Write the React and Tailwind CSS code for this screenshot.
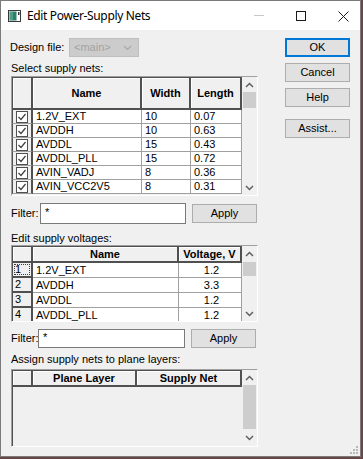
import React from "react";

const Chevron = ({ up }) => (
  <svg width="9" height="6" viewBox="0 0 9 6">
    <polyline
      points={up ? "1,5 4.5,1.5 8,5" : "1,1 4.5,4.5 8,1"}
      fill="none"
      stroke="#606060"
      strokeWidth="1.5"
    />
  </svg>
);

const Scrollbar = ({ upH, thumbH, trackH, downH }) => (
  <div className="w-[15px] flex flex-col bg-[#f0f0f0] shrink-0">
    <div className="flex items-center justify-center" style={{ height: upH }}>
      <Chevron up />
    </div>
    <div className="bg-[#cdcdcd] mx-[1px]" style={{ height: thumbH }} />
    <div style={{ height: trackH }} />
    <div className="flex items-center justify-center" style={{ height: downH }}>
      <Chevron />
    </div>
  </div>
);

const Check = () => (
  <div className="w-[12px] h-[12px] border border-[#505050] bg-white flex items-center justify-center">
    <svg width="10" height="10" viewBox="0 0 10 10">
      <polyline points="1.5,5 4,7.5 8.5,2" fill="none" stroke="#404040" strokeWidth="1.2" />
    </svg>
  </div>
);

const HeadCell = ({ w, children, first }) => (
  <div
    className={
      "h-full flex items-center justify-center font-bold bg-[#f0f0f0] border-r-2 border-b-2 border-[#505050] shadow-[inset_1px_1px_0_#ffffff] shrink-0 " +
      (first ? "border-l border-l-[#505050]" : "")
    }
    style={{ width: w }}
  >
    {children}
  </div>
);

const DataCell = ({ w, children, center }) => (
  <div
    className={
      "h-full flex items-center bg-white border-r border-b border-[#a0a0a0] shrink-0 pl-[3px] " +
      (center ? "justify-center pl-0" : "")
    }
    style={{ width: w }}
  >
    {children}
  </div>
);

const nets = [
  ["1.2V_EXT", "10", "0.07"],
  ["AVDDH", "10", "0.63"],
  ["AVDDL", "15", "0.43"],
  ["AVDDL_PLL", "15", "0.72"],
  ["AVIN_VADJ", "8", "0.36"],
  ["AVIN_VCC2V5", "8", "0.31"],
];

const volts = [
  ["1.2V_EXT", "1.2"],
  ["AVDDH", "3.3"],
  ["AVDDL", "1.2"],
  ["AVDDL_PLL", "1.2"],
];

const Btn = ({ children, def, className = "" }) => (
  <div
    className={
      "w-[65px] h-[19px] flex items-center justify-center bg-[#e1e1e1] " +
      (def ? "border-2 border-[#0078d7]" : "border border-[#adadad]") +
      " " +
      className
    }
  >
    {children}
  </div>
);

export default function App() {
  return (
    <div className="w-[363px] h-[459px] bg-[#6a4747] font-['Liberation_Sans',Arial,sans-serif] text-[11px] text-black">
      <div className="w-[361px] h-[457px] border border-[#7b7b7b] bg-[#f0f0f0] flex flex-col overflow-hidden">
        {/* Title bar */}
        <div className="h-[29px] bg-white flex items-center shrink-0 relative">
          <svg className="ml-[7px]" width="13" height="12" viewBox="0 0 13 12">
            <rect x="0.5" y="0.5" width="12" height="11" fill="#ffffff" stroke="#3a3a3a" />
            <rect x="1.5" y="1.5" width="7" height="9" fill="#2f7d6a" />
            <rect x="2" y="2" width="3" height="8" fill="#4e9e86" />
            <rect x="10" y="2" width="1.5" height="3" fill="#3a3a3a" />
          </svg>
          <span className="ml-[6px] font-['Noto_Sans',sans-serif] text-[12px] tracking-[-0.35px] text-black">
            Edit Power-Supply Nets
          </span>
          <div className="absolute left-[253px] top-[14px] w-[10px] h-[1px] bg-[#c8c8c8]" />
          <div className="absolute left-[295px] top-[10px] w-[10px] h-[10px] border border-[#1a1a1a]" />
          <svg className="absolute left-[337px] top-[10px]" width="11" height="11" viewBox="0 0 11 11">
            <path d="M0.5 0.5 L10.5 10.5 M10.5 0.5 L0.5 10.5" stroke="#1a1a1a" strokeWidth="1" />
          </svg>
        </div>

        {/* Body */}
        <div className="flex flex-row pl-[10px] flex-1 relative">
          {/* Left column */}
          <div className="w-[247px] flex flex-col">
            {/* Design file */}
            <div className="mt-[8px] h-[19px] flex items-center">
              <span className="w-[59px] -ml-[1px]">Design file:</span>
              <div className="w-[70px] h-[19px] bg-[#cccccc] border border-[#bfbfbf] flex items-center pl-[4px] text-[#a3a3a3]">
                <span className="flex-1">&lt;main&gt;</span>
                <svg className="mr-[6px]" width="9" height="6" viewBox="0 0 9 6">
                  <polyline points="1,1 4.5,4.5 8,1" fill="none" stroke="#a8a8a8" strokeWidth="1.2" />
                </svg>
              </div>
            </div>

            <div className="mt-[5px] h-[13px] leading-[13px]">Select supply nets:</div>

            {/* Table 1 */}
            <div className="mt-[1px] h-[120px] border border-[#a0a0a0] border-r-white border-b-white flex flex-row overflow-hidden">
              <div className="w-[230px] flex flex-col overflow-hidden">
                <div className="h-[33px] flex flex-row shrink-0 border-t border-[#505050]">
                  <HeadCell w={21} first />
                  <HeadCell w={109}>Name</HeadCell>
                  <HeadCell w={49}>Width</HeadCell>
                  <HeadCell w={51}>Length</HeadCell>
                </div>
                {nets.map((r) => (
                  <div key={r[0]} className="h-[14px] flex flex-row shrink-0">
                    <div className="w-[21px] h-full flex items-center justify-center bg-[#f0f0f0] border-l border-l-[#505050] border-r-2 border-r-[#505050] border-b border-b-[#a0a0a0] shrink-0">
                      <Check />
                    </div>
                    <DataCell w={109}>{r[0]}</DataCell>
                    <DataCell w={49}>{r[1]}</DataCell>
                    <DataCell w={51}>{r[2]}</DataCell>
                  </div>
                ))}
              </div>
              <Scrollbar upH={15} thumbH={16} trackH={72} downH={15} />
            </div>

            {/* Filter 1 */}
            <div className="mt-[7px] h-[21px] flex flex-row items-center">
              <span className="w-[29px]">Filter:</span>
              <div className="w-[146px] h-[21px] bg-white border border-[#7a7a7a] pl-[4px] leading-[17px]">*</div>
              <Btn className="ml-[6px] h-[18px] border-[#adadad]">Apply</Btn>
            </div>

            <div className="mt-[8px] h-[13px] leading-[13px]">Edit supply voltages:</div>

            {/* Table 2 */}
            <div className="h-[77px] border border-[#a0a0a0] border-r-white border-b-white flex flex-row overflow-hidden">
              <div className="w-[230px] flex flex-col overflow-hidden">
                <div className="h-[17px] flex flex-row shrink-0 border-t border-[#505050]">
                  <HeadCell w={21} first />
                  <HeadCell w={146}>Name</HeadCell>
                  <HeadCell w={63}>Voltage, V</HeadCell>
                </div>
                {volts.map((r, i) => (
                  <div key={r[0]} className="h-[15px] flex flex-row shrink-0">
                    <div className="w-[21px] h-full flex items-center bg-[#f0f0f0] border-l border-[#505050] border-r-2 border-b-2 pl-[2px] shrink-0 relative">
                      {i + 1}
                      {i === 0 && (
                        <div className="absolute inset-[1px] border border-dotted border-[#404040]" />
                      )}
                    </div>
                    <DataCell w={146}>{r[0]}</DataCell>
                    <DataCell w={63} center>{r[1]}</DataCell>
                  </div>
                ))}
              </div>
              <Scrollbar upH={16} thumbH={14} trackH={30} downH={15} />
            </div>

            {/* Filter 2 */}
            <div className="mt-[7px] h-[19px] flex flex-row items-center">
              <span className="w-[27px]">Filter:</span>
              <div className="w-[147px] h-[19px] bg-white border border-[#7a7a7a] pl-[4px] leading-[15px]">*</div>
              <Btn className="ml-[6px] h-[17px]">Apply</Btn>
            </div>

            <div className="mt-[5px] h-[13px] leading-[13px]">Assign supply nets to plane layers:</div>

            {/* Table 3 */}
            <div className="mt-[3px] h-[78px] border border-[#a0a0a0] border-r-white border-b-white flex flex-row overflow-hidden">
              <div className="w-[230px] flex flex-col overflow-hidden">
                <div className="h-[17px] flex flex-row shrink-0 border-t border-[#505050]">
                  <HeadCell w={21} first />
                  <HeadCell w={104}>Plane Layer</HeadCell>
                  <HeadCell w={105}>Supply Net</HeadCell>
                </div>
                <div className="flex-1 border-l border-[#505050]" />
              </div>
              <Scrollbar upH={15} thumbH={44} trackH={1} downH={16} />
            </div>
          </div>

          {/* Right column */}
          <div className="ml-[27px] flex flex-col">
            <Btn def className="mt-[8px]">OK</Btn>
            <Btn className="mt-[6px]">Cancel</Btn>
            <Btn className="mt-[6px]">Help</Btn>
            <Btn className="mt-[12px]">Assist...</Btn>
          </div>

          {/* size grip */}
          <svg className="absolute right-[2px] bottom-[2px]" width="8" height="8" viewBox="0 0 8 8">
            <rect x="6" y="0" width="2" height="2" fill="#b8b8b8" />
            <rect x="3" y="3" width="2" height="2" fill="#b8b8b8" />
            <rect x="6" y="3" width="2" height="2" fill="#b8b8b8" />
            <rect x="0" y="6" width="2" height="2" fill="#b8b8b8" />
            <rect x="3" y="6" width="2" height="2" fill="#b8b8b8" />
            <rect x="6" y="6" width="2" height="2" fill="#b8b8b8" />
          </svg>
        </div>
      </div>
    </div>
  );
}
